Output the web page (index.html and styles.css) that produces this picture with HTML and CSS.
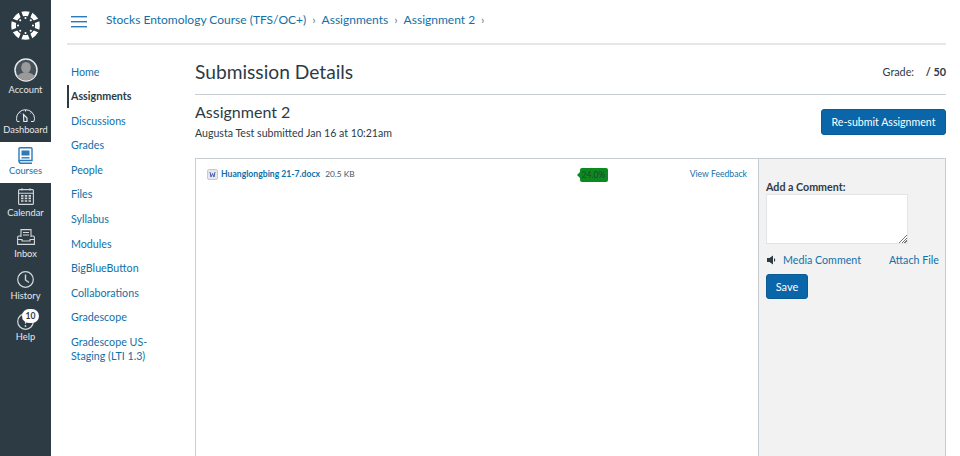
FILE: index.html
```html
<!DOCTYPE html>
<html lang="en">
<head>
  <meta charset="UTF-8" />
  <title>Submission Details</title>
  <link rel="stylesheet" href="styles.css">
</head>
<body>
  <nav class="global-nav">
    <div class="logo">
      <svg width="29" height="29" viewBox="0 0 28 28" fill="#fff">
        <defs>
          <g id="seg">
            <path d="M10 .7 Q14 -.2 18 .7 L16.300 5 Q14 4.500 11.700 5Z"/>
            <circle cx="14" cy="6.800" r="1"/>
          </g>
        </defs>
        <use href="#seg"/>
        <use href="#seg" transform="rotate(45 14 14)"/>
        <use href="#seg" transform="rotate(90 14 14)"/>
        <use href="#seg" transform="rotate(135 14 14)"/>
        <use href="#seg" transform="rotate(180 14 14)"/>
        <use href="#seg" transform="rotate(225 14 14)"/>
        <use href="#seg" transform="rotate(270 14 14)"/>
        <use href="#seg" transform="rotate(315 14 14)"/>
      </svg>
    </div>
    <a class="nav-item account">
      <svg width="24" height="24" viewBox="0 0 24 24">
        <circle cx="12" cy="12" r="11" fill="#46525b" stroke="#e6e8ea" stroke-width="1.500"/>
        <ellipse cx="12" cy="9.500" rx="4.800" ry="5.500" fill="#9a9a9a"/>
        <path d="M3.300 18.500 Q5 15.500 9.500 14.500 H14.500 Q19 15.500 20.700 18.500 Q17.500 22.300 12 22.300 Q6.500 22.300 3.300 18.500Z" fill="#9a9a9a"/>
      </svg>
      <span>Account</span>
    </a>
    <a class="nav-item dashboard">
      <svg width="19" height="13" viewBox="0 0 19 13" fill="none" stroke="#e6e8ea" stroke-width="1">
        <path d="M3.500 12.500 H1.200 Q.5 11 .5 9.500 A9 8.800 0 0 1 18.500 9.500 Q18.500 11 17.800 12.500 H15"/>
        <path d="M7.500 5.500 L11 9 V12.500 H7.800 Z" stroke-width="1.200"/>
        <path d="M9.500 1 V2.500 M3.500 3.300 L4.600 4.400 M15.500 3.300 L14.400 4.400"/>
      </svg>
      <span>Dashboard</span>
    </a>
    <a class="nav-item courses active">
      <svg width="15" height="17" viewBox="0 0 15 17" fill="none" stroke="#2b7abc" stroke-width="1.400">
        <path d="M1 13.500 V1.800 Q1 .7 2.100 .7 H12.900 Q14 .7 14 1.800 V13.500 Z"/>
        <path d="M1 13.500 Q1 16.300 3 16.300 H14"/>
        <rect x="3.500" y="3.500" width="8" height="5" fill="#2b7abc" stroke="none"/>
        <path d="M3.500 10.800 H11.500"/>
      </svg>
      <span>Courses</span>
    </a>
    <a class="nav-item calendar">
      <svg width="16" height="17" viewBox="0 0 16 17" fill="none" stroke="#d5d8da" stroke-width="1.100">
        <rect x=".6" y="1.600" width="14.800" height="14.800" rx="1"/>
        <path d="M.6 5.200 H15.400 M4 .2 V2.500 M12 .2 V2.500"/>
        <path d="M3 7.800 H13 M3 10.400 H13 M3 13 H13" stroke-width="1.700" stroke-dasharray="2.500 1.250"/>
      </svg>
      <span>Calendar</span>
    </a>
    <a class="nav-item inbox">
      <svg width="18" height="16" viewBox="0 0 18 16" fill="none" stroke="#d5d8da" stroke-width="1.100">
        <path d="M4 8 V.6 H14 V8"/>
        <path d="M6 3.500 H12 M6 6 H12"/>
        <path d="M4 7 H2 Q.6 7 .6 8.500 V15.400 H17.400 V8.500 Q17.400 7 16 7 H14"/>
        <path d="M.6 10.500 H5 V12 H13 V10.500 H17.400"/>
      </svg>
      <span>Inbox</span>
    </a>
    <a class="nav-item history">
      <svg width="17" height="17" viewBox="0 0 17 17" fill="none" stroke="#d5d8da" stroke-width="1.200">
        <circle cx="8.500" cy="8.500" r="7.800"/>
        <path d="M8.500 3.500 V9 L12 11.500" stroke-width="1.400"/>
      </svg>
      <span>History</span>
    </a>
    <a class="nav-item help">
      <svg width="17" height="17" viewBox="0 0 17 17" fill="none" stroke="#d5d8da" stroke-width="1.200">
        <circle cx="8.500" cy="8.500" r="7.800"/>
        <path d="M6.200 6.500 Q6.200 4.300 8.500 4.300 Q10.800 4.300 10.800 6.500 Q10.800 8 8.500 9.500 V10.800"/>
        <circle cx="8.500" cy="13" r=".9" fill="#d5d8da" stroke="none"/>
      </svg>
      <span class="badge">10</span>
      <span>Help</span>
    </a>
  </nav>

  <div class="page">
    <header class="topbar">
      <svg class="burger" width="16" height="12" viewBox="0 0 16 12" fill="#2b7abc">
        <rect y="0" width="16" height="1.400"/>
        <rect y="5" width="16" height="1.400"/>
        <rect y="10" width="16" height="1.400"/>
      </svg>
      <ul class="crumbs">
        <li>Stocks Entomology Course (TFS/OC+)</li>
        <li>Assignments</li>
        <li>Assignment 2</li>
      </ul>
    </header>

    <div class="columns">
      <ul class="course-nav">
        <li>Home</li>
        <li class="current">Assignments</li>
        <li>Discussions</li>
        <li>Grades</li>
        <li>People</li>
        <li>Files</li>
        <li>Syllabus</li>
        <li>Modules</li>
        <li>BigBlueButton</li>
        <li>Collaborations</li>
        <li>Gradescope</li>
        <li>Gradescope US-Staging (LTI 1.3)</li>
      </ul>

      <main class="content">
        <div class="title-row">
          <h1>Submission Details</h1>
          <div class="grade"><span>Grade:</span> <b>/ 50</b></div>
        </div>
        <div class="assignment-row">
          <div>
            <h2>Assignment 2</h2>
            <p>Augusta Test submitted Jan 16 at 10:21am</p>
          </div>
          <button class="btn resubmit">Re-submit Assignment</button>
        </div>

        <section class="submission">
          <div class="file-pane">
            <svg class="file-icon" width="11" height="11" viewBox="0 0 11 11">
              <rect x=".5" y=".5" width="10" height="10" rx="1.500" fill="#e6e6ee" stroke="#c9c9d6"/>
              <path d="M3 3 L4 8 L5.500 4.500 L7 8 L8 3" fill="none" stroke="#4a5fa8"/>
            </svg>
            <a class="file-name">Huanglongbing 21-7.docx</a>
            <span class="file-size">20.5 KB</span>
            <span class="score">24.0%</span>
            <a class="feedback">View Feedback</a>
          </div>
          <aside class="comment-pane">
            <label for="comment">Add a Comment:</label>
            <textarea id="comment"></textarea>
            <div class="comment-links">
              <svg width="11" height="10" viewBox="0 0 11 10" fill="#2d3b45">
                <path d="M1 3 H3.500 L7 .5 V9.500 L3.500 7 H1Z"/>
                <path d="M8 3 Q10.500 5 8 7Z"/>
              </svg>
              <a class="media">Media Comment</a>
              <a class="attach">Attach File</a>
            </div>
            <button class="btn save">Save</button>
          </aside>
        </section>
      </main>
    </div>
  </div>
</body>
</html>
```

FILE: styles.css
```css
html, body {
  height: 100%;
}
body {
  margin: 0;
  height: 456px;
  overflow: hidden;
  display: flex;
  font-family: Lato, "Open Sans", sans-serif;
  font-size: 11px;
  color: #2d3b45;
  background-color: #fff;
}
a {
  color: #1270a8;
}
ul {
  list-style: none;
  margin: 0;
  padding: 0;
}

/* Global nav */
.global-nav {
  width: 51px;
  flex: none;
  background-color: #2d3b45;
  display: flex;
  flex-direction: column;
  align-items: stretch;
}
.logo {
  height: 55px;
  display: flex;
  justify-content: center;
  align-items: flex-start;
  padding-top: 11px;
  box-sizing: border-box;
}
.nav-item {
  position: relative;
  display: flex;
  flex-direction: column;
  align-items: center;
  box-sizing: border-box;
  color: #e6e8ea;
  font-size: 9.300px;
  line-height: 12px;
}
.nav-item svg {
  flex: none;
}
.nav-item span {
  margin-top: 2px;
}
.account {
  height: 47px;
  padding-top: 3px;
}
.dashboard {
  height: 40px;
  padding-top: 7px;
}
.courses {
  height: 41px;
  padding-top: 5px;
  background-color: #fff;
  color: #1270a8;
}
.courses span {
  margin-top: 1px;
}
.calendar {
  height: 41px;
  padding-top: 5px;
}
.inbox {
  height: 41px;
  padding-top: 5px;
}
.inbox span {
  margin-top: 3px;
}
.history {
  height: 41px;
  padding-top: 6px;
}
.help {
  padding-top: 7px;
}
.help span:last-child {
  margin-top: 1px;
}
.nav-item .badge {
  position: absolute;
  top: 3px;
  left: 22px;
  margin: 0;
  width: 17px;
  height: 14px;
  border-radius: 8px;
  background-color: #fff;
  color: #2d3b45;
  font-size: 8.500px;
  font-weight: 700;
  line-height: 14px;
  text-align: center;
}

/* Main page */
.page {
  flex: 1;
  padding: 0 14px 0 16px;
  min-width: 0;
}
.topbar {
  height: 43px;
  border-bottom: 2px solid #e4e6e8;
  display: flex;
  align-items: flex-start;
}
.burger {
  margin: 16px 0 0 4px;
}
.crumbs {
  display: flex;
  margin: 12px 0 0 19px;
  font-size: 12px;
  line-height: 16px;
  color: #1270a8;
}
.crumbs li::after {
  content: "\203A";
  color: #6b7780;
  margin: 0 6px 0 6px;
}
.columns {
  display: flex;
}
.course-nav {
  width: 128px;
  flex: none;
  padding-top: 15px;
  font-size: 10.700px;
  color: #1270a8;
}
.course-nav li {
  padding: 4.500px 0 4.500px 4px;
  margin-bottom: 1.600px;
  line-height: 14px;
  width: 84px;
}
.course-nav li.current {
  color: #2d3b45;
  font-weight: 700;
  border-left: 2px solid #2d3b45;
  padding-left: 2px;
}
.content {
  flex: 1;
  min-width: 0;
}
.title-row {
  height: 50px;
  border-bottom: 1px solid #c7cdd1;
  display: flex;
  justify-content: space-between;
  align-items: center;
  padding-top: 4px;
  box-sizing: border-box;
}
h1 {
  margin: 0;
  font-size: 19.200px;
  font-weight: 400;
  line-height: 24px;
}
.grade {
  font-size: 10.800px;
}
.grade b {
  margin-left: 9px;
}
.assignment-row {
  display: flex;
  justify-content: space-between;
  align-items: flex-start;
  height: 63px;
}
h2 {
  margin: 7px 0 0;
  font-size: 16px;
  font-weight: 400;
  line-height: 20px;
}
.assignment-row p {
  margin: 4px 0 0;
  font-size: 10.600px;
  line-height: 15px;
}
.btn {
  background-color: #0a66a8;
  color: #fff;
  border: 1px solid #0a5a94;
  border-radius: 3px;
  font-family: inherit;
  font-size: 10.600px;
}
.resubmit {
  width: 125px;
  height: 26px;
  margin-top: 14px;
  padding: 0;
}

/* Submission box */
.submission {
  display: flex;
  height: 300px;
  border: 1px solid #c7cdd1;
  box-sizing: border-box;
}
.file-pane {
  flex: 1;
  min-width: 0;
  display: flex;
  align-items: flex-start;
  padding: 9px 11px 0 11px;
  font-size: 8.650px;
  line-height: 12px;
}
.file-icon {
  margin-right: 3px;
  margin-top: 1px;
}
.file-name {
  font-weight: 700;
}
.file-size {
  margin-left: 5px;
  font-size: 8.300px;
  color: #4a5560;
}
.score {
  position: relative;
  margin-left: 225px;
  width: 28px;
  height: 14px;
  background-color: #0b8a1e;
  border-radius: 2px;
  text-align: center;
  line-height: 14px;
  color: #2d3b45;
}
.score::before {
  content: "";
  position: absolute;
  left: -3px;
  top: 4px;
  border-style: solid;
  border-width: 3px 3px 3px 0;
  border-color: transparent #0b8a1e transparent transparent;
}
.feedback {
  margin-left: auto;
}
.comment-pane {
  width: 187px;
  flex: none;
  background-color: #f2f2f2;
  border-left: 1px solid #c7cdd1;
  padding: 21px 0 0 7px;
  box-sizing: border-box;
}
.comment-pane label {
  display: block;
  font-size: 10.700px;
  font-weight: 700;
  line-height: 14px;
}
.comment-pane textarea {
  display: block;
  width: 142px;
  height: 50px;
  box-sizing: border-box;
  margin: 0;
  resize: none;
  border: 1px solid #e2e5e7;
  background-color: #fff;
  background-image: linear-gradient(135deg, #fff 50%, transparent 50%), repeating-linear-gradient(135deg, #777 0 1px, #fff 1px 2px);
  background-size: 10px 10px;
  background-position: right bottom;
  background-repeat: no-repeat;
}
.comment-links {
  display: flex;
  align-items: center;
  margin-top: 8px;
  width: 173px;
  font-size: 10.700px;
  line-height: 15px;
}
.media {
  margin-left: 6px;
}
.attach {
  margin-left: auto;
}
.save {
  display: block;
  width: 42px;
  height: 25px;
  margin-top: 7px;
  padding: 0;
  font-size: 11px;
}
```
